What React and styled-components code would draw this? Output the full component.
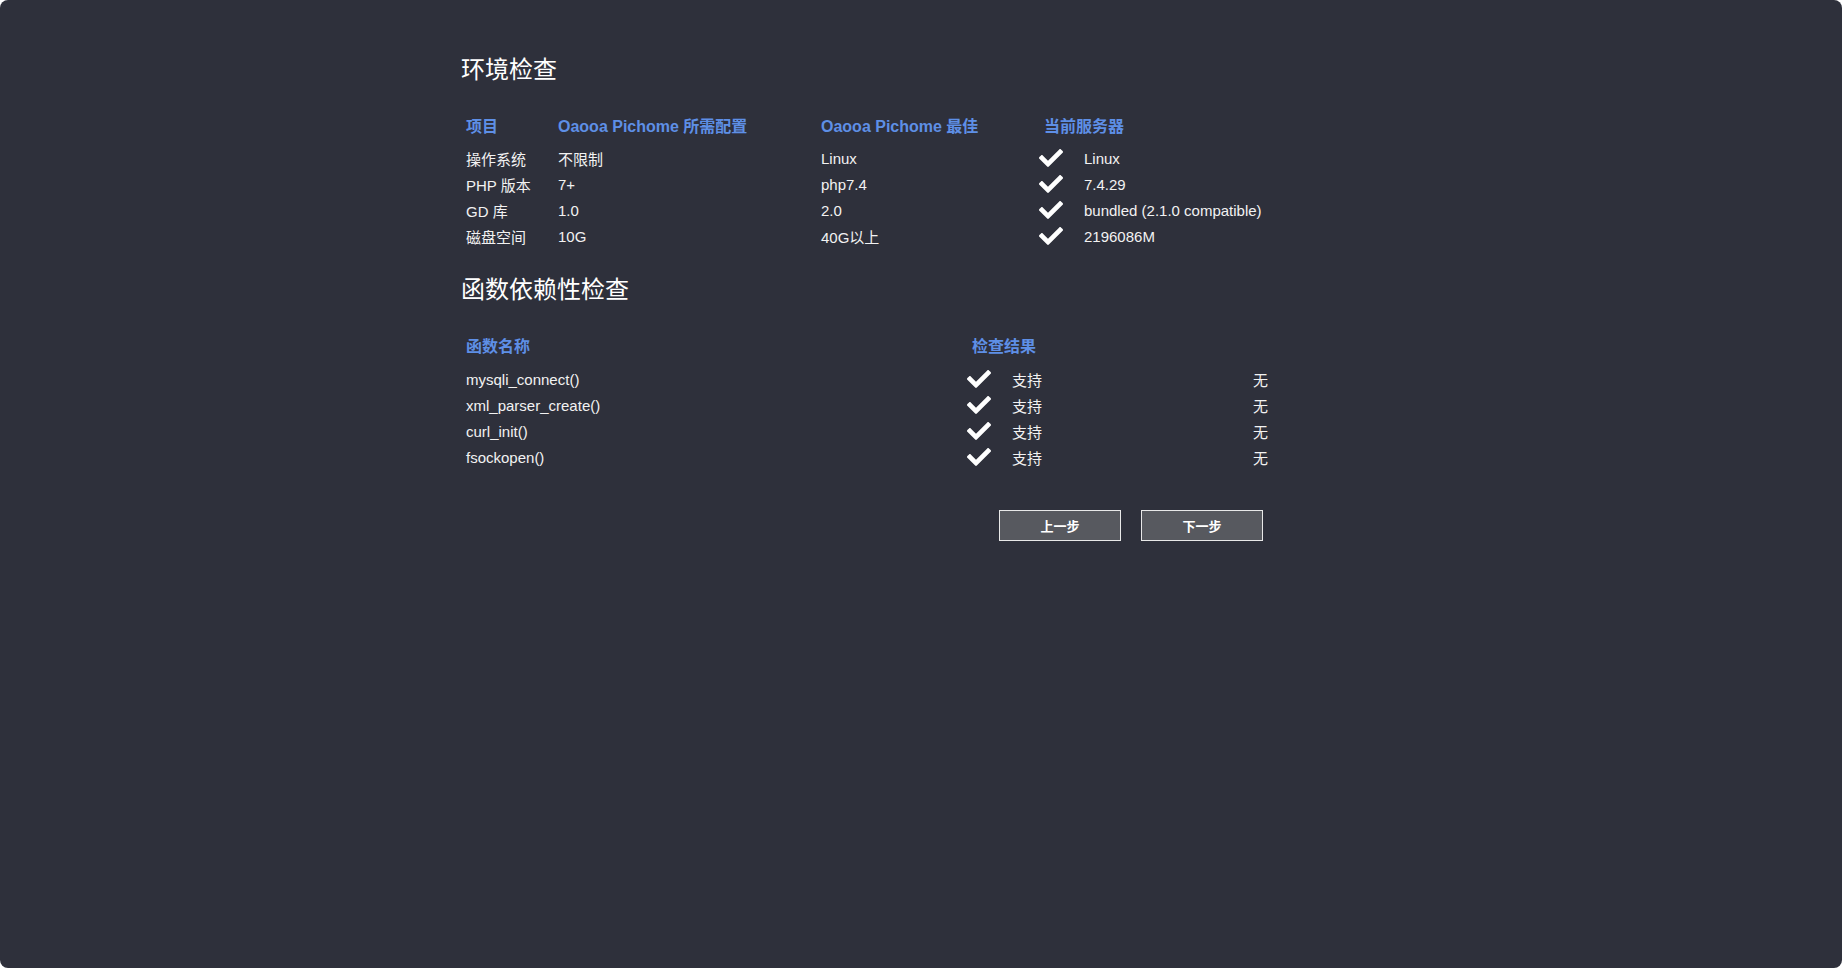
import React from 'react';
import styled, { createGlobalStyle } from 'styled-components';
import { FaCheck } from 'react-icons/fa';

const GlobalStyle = createGlobalStyle`
    html, body {
        margin: 0;
        padding: 0;
        background: #ffffff;
    }
    body {
        font-family: "Liberation Sans", "Noto Sans CJK SC", sans-serif;
    }
`;

const envRows = [
    ['操作系统', '不限制', 'Linux', 'Linux'],
    ['PHP 版本', '7+', 'php7.4', '7.4.29'],
    ['GD 库', '1.0', '2.0', 'bundled (2.1.0 compatible)'],
    ['磁盘空间', '10G', '40G以上', '2196086M'],
];

const funcRows = ['mysqli_connect()', 'xml_parser_create()', 'curl_init()', 'fsockopen()'];

const ENV_COLS = '92px 263px 218px 45px 1fr';
const FUNC_COLS = '501px 45px 1fr auto';

const App = () => {
    return (
        <Page>
            <GlobalStyle />
            <Content>
                <Heading>环境检查</Heading>
                <Table>
                    <HeadRow>
                        <HeadCell>项目</HeadCell>
                        <HeadCell>Oaooa Pichome 所需配置</HeadCell>
                        <HeadCell>Oaooa Pichome 最佳</HeadCell>
                        <HeadCell indent span={2}>当前服务器</HeadCell>
                    </HeadRow>
                    {envRows.map((r) => (
                        <Row key={r[0]}>
                            <Cell>{r[0]}</Cell>
                            <Cell>{r[1]}</Cell>
                            <Cell>{r[2]}</Cell>
                            <CheckCell><FaCheck size={24} /></CheckCell>
                            <Cell>{r[3]}</Cell>
                        </Row>
                    ))}
                </Table>

                <Heading second>函数依赖性检查</Heading>
                <Table second>
                    <HeadRow second>
                        <HeadCell>函数名称</HeadCell>
                        <HeadCell indent span={3}>检查结果</HeadCell>
                    </HeadRow>
                    {funcRows.map((f) => (
                        <Row key={f} second>
                            <Cell>{f}</Cell>
                            <CheckCell><FaCheck size={24} /></CheckCell>
                            <Cell>支持</Cell>
                            <Cell>无</Cell>
                        </Row>
                    ))}
                </Table>

                <Actions>
                    <Button>上一步</Button>
                    <Button>下一步</Button>
                </Actions>
            </Content>
        </Page>
    );
};

export default App;

const Page = styled.div`
    min-height: 100vh;
    background: #2e303b;
    border-radius: 8px;
    box-sizing: border-box;
    overflow: hidden;
`;

const Content = styled.div`
    padding: 51px 0 0 461px;
    width: 807px;
`;

const Heading = styled.h2`
    margin: 0;
    margin-top: ${(p) => (p.second ? '22px' : '0')};
    font-size: 24px;
    line-height: 34px;
    font-weight: normal;
    color: #ffffff;
    font-family: "Noto Sans CJK SC", sans-serif;
`;

const Table = styled.div`
    margin: 27px 0 0 5px;
    width: 802px;
    display: flex;
    flex-direction: column;
`;

const Row = styled.div`
    display: grid;
    grid-template-columns: ${(p) => (p.second ? FUNC_COLS : ENV_COLS)};
    height: 26px;
    align-items: center;
`;

const HeadRow = styled(Row)`
    margin-bottom: ${(p) => (p.second ? '8px' : '7px')};
`;

const HeadCell = styled.div`
    grid-column: span ${(p) => p.span || 1};
    padding-left: ${(p) => (p.indent ? '5px' : '0')};
    color: #5e8fe6;
    font-weight: bold;
    font-size: 16px;
    white-space: nowrap;
`;

const Cell = styled.div`
    color: #f2f2f2;
    font-size: 15px;
    white-space: nowrap;
`;

const CheckCell = styled.div`
    display: flex;
    align-items: center;
    color: #ffffff;
    height: 26px;
`;

const Actions = styled.div`
    display: flex;
    justify-content: flex-end;
    gap: 20px;
    margin-top: 40px;
    width: 807px;
    padding-right: 5px;
    box-sizing: border-box;
`;

const Button = styled.button`
    width: 122px;
    height: 31px;
    background: #57595f;
    border: 1.5px solid #e8e8e8;
    color: #ffffff;
    font-size: 13px;
    font-weight: bold;
    font-family: "Noto Sans CJK SC", sans-serif;
    cursor: pointer;
    padding: 0;
`;
